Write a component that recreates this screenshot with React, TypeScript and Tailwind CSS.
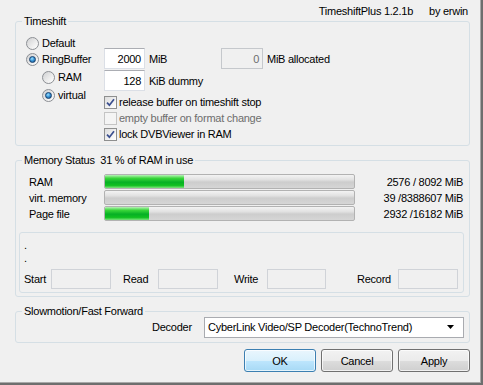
import React from "react";

function Radio({ checked }: { checked?: boolean }) {
  return (
    <span className="w-[13px] h-[13px] shrink-0 rounded-full border border-[#8c8f94] bg-[linear-gradient(135deg,#cfd0d2_0%,#eeeeee_60%,#ffffff_100%)] flex items-center justify-center">
      {checked && (
        <span className="w-[7px] h-[7px] rounded-full border border-[#17416e] bg-[radial-gradient(circle_at_40%_35%,#9ee0ff_0%,#3b97d8_45%,#114a85_100%)]" />
      )}
    </span>
  );
}

function Check({ checked, disabled }: { checked?: boolean; disabled?: boolean }) {
  return (
    <span
      className={
        "w-[13px] h-[13px] shrink-0 border flex items-center justify-center " +
        (disabled
          ? "border-[#c4c4c4] bg-[#f4f4f4]"
          : "border-[#8e8f8f] bg-[linear-gradient(135deg,#dcdcdc_0%,#f2f2f2_60%,#ffffff_100%)]")
      }
    >
      {checked && (
        <svg width="9" height="9" viewBox="0 0 9 9">
          <path d="M1 4.6 L3.4 7.2 L8 1.2" fill="none" stroke="#3b4f8f" strokeWidth="1.7" />
        </svg>
      )}
    </span>
  );
}

function TextBox({ value, disabled, w }: { value: string; disabled?: boolean; w: string }) {
  return (
    <div
      className={
        w +
        " h-[21px] shrink-0 flex items-center justify-end pr-[3px] border " +
        (disabled
          ? "border-[#c5c8cc] bg-[#f0f0f0] text-[#6d6d6d]"
          : "border-[#dbdfe6] border-t-[#abadb3] bg-white text-black")
      }
    >
      {value}
    </div>
  );
}

function Bar({ pct }: { pct: number }) {
  return (
    <div className="w-[251px] h-[15px] rounded-[2px] border border-[#b2b2b2] bg-[linear-gradient(to_bottom,#f3f3f3_0%,#e2e2e2_35%,#cdcdcd_55%,#d6d6d6_100%)] overflow-hidden">
      <div
        className="h-full bg-[linear-gradient(to_bottom,#b8f2b8_0%,#3ad63a_25%,#06b025_55%,#10c020_80%,#7ee27e_100%)]"
        style={{ width: `${pct}%` }}
      />
    </div>
  );
}

function Group({
  label,
  className,
  children,
}: {
  label: string;
  className: string;
  children?: React.ReactNode;
}) {
  return (
    <div className={"relative ml-[15px] w-[455px] rounded-[3px] border border-[#d5dfe5] " + className}>
      <span className="absolute left-[6px] top-[-8px] bg-[#f0f0f0] px-[2px] leading-[14px] whitespace-pre">
        {label}
      </span>
      {children}
    </div>
  );
}

function SmallBox({ w }: { w: string }) {
  return <div className={w + " h-[20px] shrink-0 border border-[#d0d3d8] bg-[#f0f0f0]"} />;
}

function Btn({ label, def }: { label: string; def?: boolean }) {
  return (
    <div
      className={
        "w-[72px] h-[23px] rounded-[3px] border flex items-center justify-center shadow-[inset_0_0_0_1px_rgba(255,255,255,0.7)] " +
        (def
          ? "border-[#3c7fb1] bg-[linear-gradient(to_bottom,#eaf6fd_0%,#d9f0fc_50%,#bee6fd_51%,#a7d9f5_100%)]"
          : "border-[#707070] bg-[linear-gradient(to_bottom,#f2f2f2_0%,#ebebeb_50%,#dddddd_51%,#cfcfcf_100%)]")
      }
    >
      {label}
    </div>
  );
}

export default function App() {
  return (
    <div className="w-[483px] h-[385px] bg-[#6e6e6e] font-['Liberation_Sans',Arial,sans-serif] text-[11px] leading-[14px] tracking-[-0.25px] text-black">
      <div className="w-[481px] h-[383px] bg-[#f0f0f0] border-r border-b border-[#a9a9a9] flex flex-col">
        {/* header */}
        <div className="h-[21px] shrink-0 flex items-center justify-end pr-[12px] gap-[16px]">
          <span>TimeshiftPlus 1.2.1b</span>
          <span>by erwin</span>
        </div>

        {/* Timeshift */}
        <Group label="Timeshift" className="h-[125px] shrink-0 flex pl-[10px] pt-[13px]">
          <div className="w-[78px] flex flex-col">
            <div className="h-[16px] flex items-center gap-[3px]">
              <Radio />
              <span>Default</span>
            </div>
            <div className="h-[16px] flex items-center gap-[3px]">
              <Radio checked />
              <span>RingBuffer</span>
            </div>
            <div className="h-[16px] mt-[2px] ml-[16px] flex items-center gap-[3px]">
              <Radio />
              <span>RAM</span>
            </div>
            <div className="h-[16px] mt-[2px] ml-[16px] flex items-center gap-[3px]">
              <Radio checked />
              <span>virtual</span>
            </div>
          </div>
          <div className="flex flex-col pt-[13px]">
            <div className="flex items-center">
              <TextBox value="2000" w="w-[41px]" />
              <span className="ml-[4px] w-[72px]">MiB</span>
              <TextBox value="0" w="w-[42px]" disabled />
              <span className="ml-[4px]">MiB allocated</span>
            </div>
            <div className="flex items-center mt-[1px]">
              <TextBox value="128" w="w-[41px]" />
              <span className="ml-[4px]">KiB dummy</span>
            </div>
            <div className="h-[16px] mt-[3px] flex items-center gap-[2px]">
              <Check checked />
              <span>release buffer on timeshift stop</span>
            </div>
            <div className="h-[16px] flex items-center gap-[2px]">
              <Check disabled />
              <span className="text-[#6d6d6d]">empty buffer on format change</span>
            </div>
            <div className="h-[16px] flex items-center gap-[2px]">
              <Check checked />
              <span>lock DVBViewer in RAM</span>
            </div>
          </div>
        </Group>

        {/* Memory Status */}
        <Group label="Memory Status  31 % of RAM in use" className="mt-[14px] h-[137px] shrink-0 flex flex-col">
          <div className="pl-[13px] pt-[13px] pr-[6px] flex flex-col gap-[1px]">
            {[
              { l: "RAM", p: 31.8, v: "2576 / 8092 MiB" },
              { l: "virt. memory", p: 0, v: "39 /8388607 MiB" },
              { l: "Page file", p: 17.8, v: "2932 /16182 MiB" },
            ].map((r) => (
              <div key={r.l} className="h-[15px] flex items-center">
                <span className="w-[75px]">{r.l}</span>
                <Bar pct={r.p} />
                <span className="flex-1 text-right">{r.v}</span>
              </div>
            ))}
          </div>
          <div className="mt-[11px] ml-[3px] w-[445px] h-[61px] rounded-[3px] border border-[#d5dfe5] pl-[4px] pt-[6px] flex flex-col">
            <div className="h-[13px] leading-[13px]">.</div>
            <div className="h-[13px] leading-[13px]">.</div>
            <div className="mt-[4px] flex items-center">
              <span className="w-[27px]">Start</span>
              <SmallBox w="w-[60px]" />
              <span className="ml-[12px] w-[35px]">Read</span>
              <SmallBox w="w-[60px]" />
              <span className="ml-[16px] w-[33px]">Write</span>
              <SmallBox w="w-[59px]" />
              <span className="ml-[31px] w-[41px]">Record</span>
              <SmallBox w="w-[60px]" />
            </div>
          </div>
        </Group>

        {/* Slowmotion */}
        <Group label="Slowmotion/Fast Forward" className="mt-[14px] h-[32px] shrink-0 flex items-center pl-[136px]">
          <span className="w-[52px]">Decoder</span>
          <div className="w-[260px] h-[21px] border border-[#a9abb0] bg-white flex items-center pl-[3px] pr-[9px]">
            <span className="flex-1">CyberLink Video/SP Decoder(TechnoTrend)</span>
            <svg width="7" height="4" viewBox="0 0 7 4">
              <path d="M0 0 H7 L3.5 4 Z" fill="#000" />
            </svg>
          </div>
        </Group>

        {/* Buttons */}
        <div className="mt-[6px] ml-[244px] flex gap-[5px]">
          <Btn label="OK" def />
          <Btn label="Cancel" />
          <Btn label="Apply" />
        </div>
      </div>
    </div>
  );
}
